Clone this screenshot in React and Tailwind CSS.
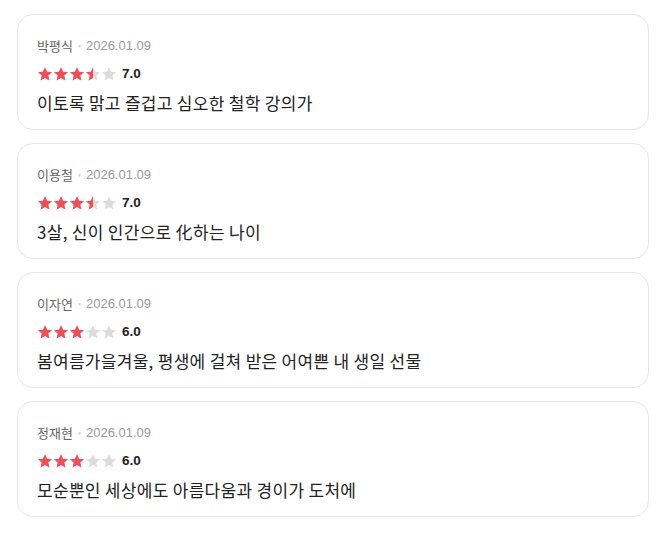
import React from "react";

const reviews = [
  { name: "박평식", date: "2026.01.09", score: 7.0, text: "이토록 맑고 즐겁고 심오한 철학 강의가" },
  { name: "이용철", date: "2026.01.09", score: 7.0, text: "3살, 신이 인간으로 化하는 나이" },
  { name: "이자연", date: "2026.01.09", score: 6.0, text: "봄여름가을겨울, 평생에 걸쳐 받은 어여쁜 내 생일 선물" },
  { name: "정재현", date: "2026.01.09", score: 6.0, text: "모순뿐인 세상에도 아름다움과 경이가 도처에" },
];

const StarShape = ({ color }) => (
  <svg viewBox="0 0 24 24" className="w-[16px] h-[16px] block" fill={color}>
    <path d="M12 1.8l3.1 6.9 7.4.7-5.6 5 1.7 7.4L12 17.9l-6.6 3.9 1.7-7.4-5.6-5 7.4-.7z" />
  </svg>
);

// score out of 10 -> 5 stars
const Stars = ({ score }) => {
  const value = score / 2;
  return (
    <div className="flex items-center">
      {[0, 1, 2, 3, 4].map((i) => {
        const fill = Math.max(0, Math.min(1, value - i));
        return (
          <div key={i} className="relative w-[16px] h-[16px]">
            <StarShape color="#dcdcdc" />
            {fill > 0 && (
              <div className="absolute inset-0 overflow-hidden" style={{ width: `${fill * 100}%` }}>
                <StarShape color="#ef4e56" />
              </div>
            )}
          </div>
        );
      })}
    </div>
  );
};

export default function App() {
  return (
    <div className="bg-white min-h-[535px] px-[17px] pt-[14px] pb-5 font-['Noto_Sans_CJK_KR','Noto_Sans',sans-serif]">
      <div className="flex flex-col gap-[13px] w-[632px]">
        {reviews.map((r) => (
          <div key={r.name} className="border border-[#e6e6e6] rounded-[16px] h-[116px] pl-[19px] pr-5 pt-[21px]">
            <div className="flex items-center h-[20px] text-[13px]">
              <span className="text-[#666]">{r.name}</span>
              <span className="mx-[5px] text-[#d4d4d4] text-[9px]">•</span>
              <span className="text-[#999] font-['Liberation_Sans',sans-serif] text-[13px]">{r.date}</span>
            </div>
            <div className="flex items-center mt-[8px] h-[20px]">
              <Stars score={r.score} />
              <span className="ml-[5px] text-[13.5px] font-bold text-[#222] font-['Liberation_Sans',sans-serif]">
                {r.score.toFixed(1)}
              </span>
            </div>
            <p className="mt-[6px] text-[17px] leading-[26px] tracking-[0.3px] text-[#222]">{r.text}</p>
          </div>
        ))}
      </div>
    </div>
  );
}
